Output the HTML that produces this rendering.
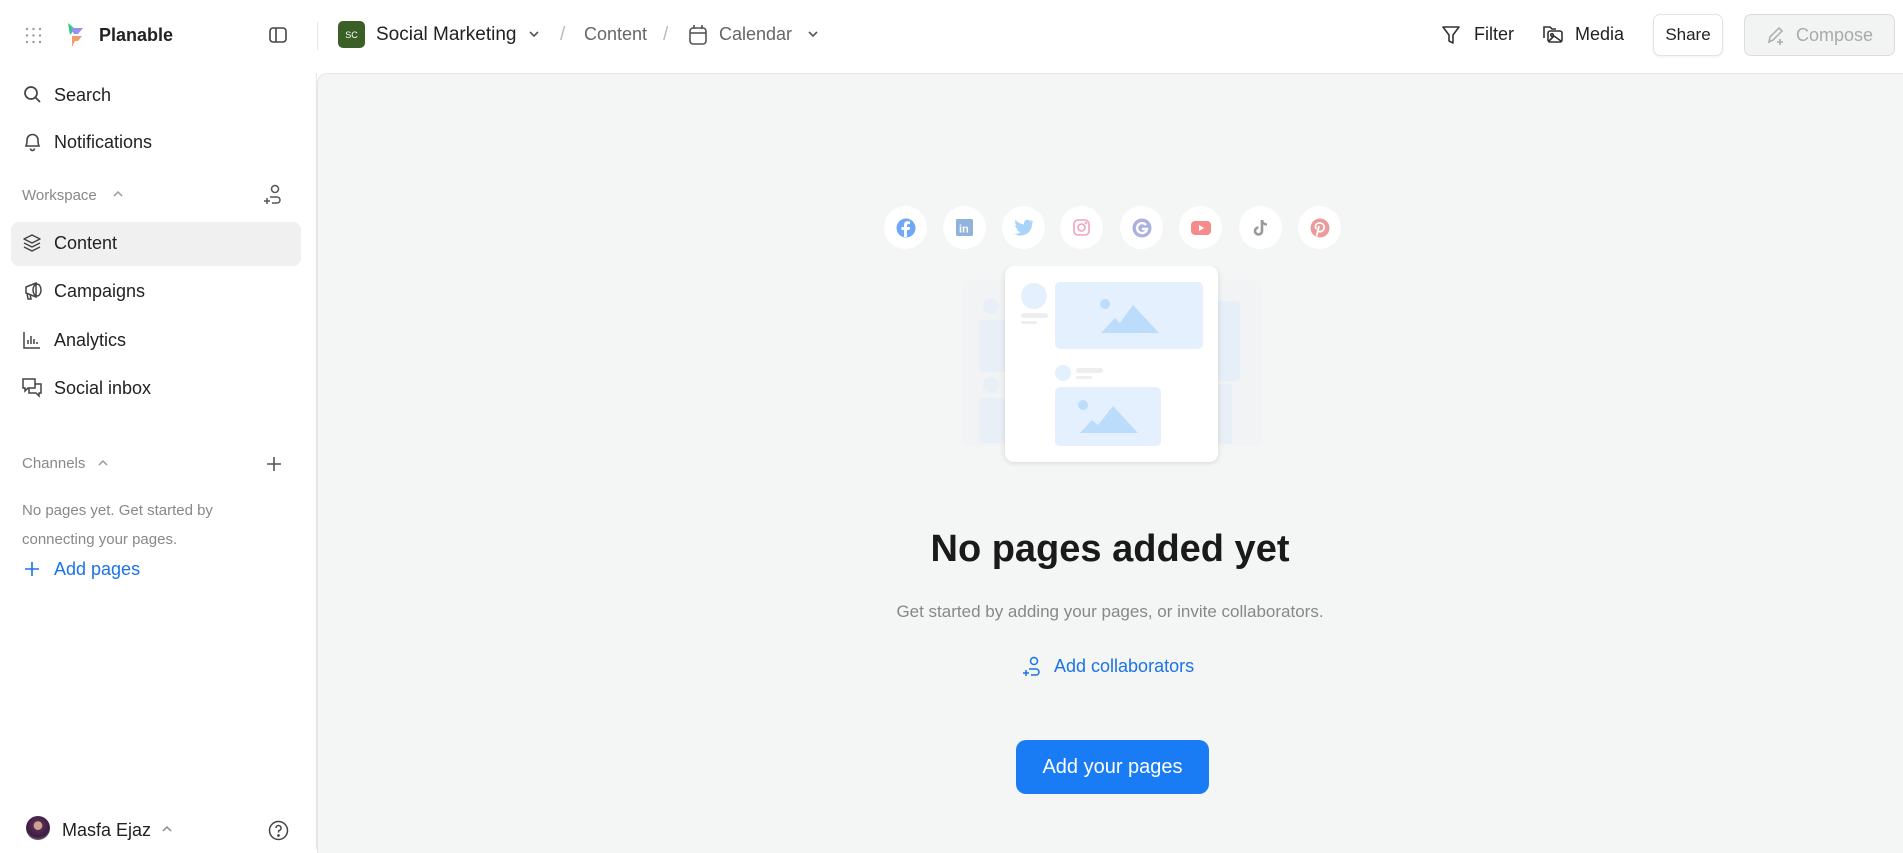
<!DOCTYPE html>
<html><head><meta charset="utf-8"><style>
*{box-sizing:border-box;margin:0;padding:0}
body{width:1903px;height:849px;overflow:hidden;background:#fff;font-family:"Liberation Sans",sans-serif;color:#222;position:relative}
.a{position:absolute;white-space:nowrap}
svg{display:block}
.nav{font-size:18px;color:#222}
.sec{font-size:15px;color:#888}
.main{position:absolute;left:317px;top:73px;width:1590px;height:780px;background:#f4f5f5;border-left:1px solid #e6e6e6;border-top:1px solid #e6e6e6;border-top-left-radius:10px}
.ci{position:absolute;width:43px;height:43px;border-radius:50%;background:#fff;top:206px;display:flex;align-items:center;justify-content:center}
</style></head><body>

<!-- top bar -->
<svg class="a" style="left:25px;top:27px" width="17" height="17" viewBox="0 0 17 17" fill="#999"><circle cx="2" cy="2" r="1.2"/><circle cx="8.5" cy="2" r="1.2"/><circle cx="15" cy="2" r="1.2"/><circle cx="2" cy="8.5" r="1.2"/><circle cx="8.5" cy="8.5" r="1.2"/><circle cx="15" cy="8.5" r="1.2"/><circle cx="2" cy="15" r="1.2"/><circle cx="8.5" cy="15" r="1.2"/><circle cx="15" cy="15" r="1.2"/></svg>
<svg class="a" style="left:66px;top:22px" width="18" height="26" viewBox="0 0 18 26"><path d="M2 1 L9 7 L4 13Z" fill="#2dc98a"/><path d="M5 6 L17 6 L12 12 L8 12Z" fill="#9a8ff0"/><path d="M6 14 L16 14 L12 19 L9 19 L6 25Z" fill="#f59a6a"/></svg>
<div class="a" style="left:99px;top:25px;font-size:18px;font-weight:bold;color:#222">Planable</div>
<svg class="a" style="left:268px;top:25px" width="20" height="20" viewBox="0 0 20 20" fill="none" stroke="#444" stroke-width="1.6"><rect x="2" y="3" width="16" height="14" rx="3"/><line x1="8" y1="3" x2="8" y2="17"/></svg>
<div class="a" style="left:317px;top:22px;width:1px;height:28px;background:#e4e4e4"></div>
<div class="a" style="left:338px;top:21px;width:27px;height:27px;border-radius:5px;background:#3a5f27;color:#fff;font-size:9px;display:flex;align-items:center;justify-content:center">SC</div>
<div class="a" style="left:376px;top:24px;font-size:19px;color:#222">Social Marketing</div>
<svg class="a" style="left:528px;top:30px" width="12" height="8" viewBox="0 0 12 8" fill="none" stroke="#555" stroke-width="1.6"><path d="M2 2 L6 6 L10 2"/></svg>
<div class="a" style="left:560px;top:24px;font-size:19px;color:#bbb">/</div>
<div class="a" style="left:584px;top:24px;font-size:18px;color:#666">Content</div>
<div class="a" style="left:663px;top:24px;font-size:19px;color:#bbb">/</div>
<svg class="a" style="left:688px;top:24px" width="20" height="22" viewBox="0 0 20 22" fill="none" stroke="#555" stroke-width="1.6"><rect x="2" y="4" width="16" height="16" rx="3"/><line x1="2" y1="9" x2="18" y2="9"/><line x1="6" y1="1" x2="6" y2="5"/><line x1="14" y1="1" x2="14" y2="5"/></svg>
<div class="a" style="left:719px;top:24px;font-size:18px;color:#666">Calendar</div>
<svg class="a" style="left:807px;top:30px" width="12" height="8" viewBox="0 0 12 8" fill="none" stroke="#555" stroke-width="1.6"><path d="M2 2 L6 6 L10 2"/></svg>

<svg class="a" style="left:1442px;top:25px" width="18" height="20" viewBox="0 0 18 20" fill="none" stroke="#333" stroke-width="1.6" stroke-linejoin="round"><path d="M1 2 H17 L11 10 V18 L7 16 V10Z"/></svg>
<div class="a" style="left:1474px;top:24px;font-size:18px;color:#222">Filter</div>
<svg class="a" style="left:1542px;top:24px" width="22" height="20" viewBox="0 0 22 20" fill="none" stroke="#333" stroke-width="1.6"><path d="M2 14 V3 H8 L10 5 H14"/><rect x="6" y="7" width="14" height="11" rx="2"/><circle cx="10" cy="11" r="1.3"/><path d="M7 17 L12 12 L19 17"/></svg>
<div class="a" style="left:1575px;top:24px;font-size:18px;color:#222">Media</div>
<div class="a" style="left:1653px;top:14px;width:70px;height:42px;border:1px solid #e2e2e2;border-radius:7px;background:#fff;font-size:17px;color:#222;display:flex;align-items:center;justify-content:center;box-shadow:0 1px 2px rgba(0,0,0,.06)">Share</div>
<div class="a" style="left:1744px;top:14px;width:151px;height:42px;border:1px solid #dcdcdc;border-radius:7px;background:#f2f3f3;font-size:18px;color:#aaa;display:flex;align-items:center;justify-content:center;gap:10px"><svg width="20" height="20" viewBox="0 0 20 20" fill="none" stroke="#aaa" stroke-width="1.5"><path d="M3 17 L4 12 L13 3 L16 6 L7 15Z"/><path d="M14 14 V20 M11 17 H17"/></svg>Compose</div>

<!-- sidebar -->
<svg class="a" style="left:23px;top:85px" width="19" height="19" viewBox="0 0 19 19" fill="none" stroke="#444" stroke-width="1.7"><circle cx="8" cy="8" r="6"/><line x1="12.5" y1="12.5" x2="17" y2="17"/></svg>
<div class="a nav" style="left:54px;top:85px">Search</div>
<svg class="a" style="left:23px;top:132px" width="19" height="20" viewBox="0 0 19 20" fill="none" stroke="#444" stroke-width="1.6"><path d="M3 14 C4 12 4 10 4 8 A5.5 5.5 0 0 1 15 8 C15 10 15 12 16 14Z"/><path d="M7.5 16.5 A2 2 0 0 0 11.5 16.5"/></svg>
<div class="a nav" style="left:54px;top:132px">Notifications</div>
<div class="a sec" style="left:22px;top:187px">Workspace</div>
<svg class="a" style="left:112px;top:190px" width="12" height="8" viewBox="0 0 12 8" fill="none" stroke="#999" stroke-width="1.5"><path d="M2 6 L6 2 L10 6"/></svg>
<svg class="a" style="left:263px;top:184px" width="20" height="22" viewBox="0 0 20 22" fill="none" stroke="#555" stroke-width="1.5"><circle cx="12" cy="5" r="3.5"/><path d="M7 13 H14 A3 3 0 0 1 14 19 H9"/><path d="M4 14 V20 M1 17 H7"/></svg>
<div class="a" style="left:11px;top:222px;width:290px;height:44px;border-radius:8px;background:#f0f0f0"></div>
<svg class="a" style="left:22px;top:233px" width="20" height="20" viewBox="0 0 20 20" fill="none" stroke="#444" stroke-width="1.5" stroke-linejoin="round"><path d="M10 2 L18 6 L10 10 L2 6Z"/><path d="M2 10 L10 14 L18 10"/><path d="M2 14 L10 18 L18 14"/></svg>
<div class="a nav" style="left:54px;top:233px">Content</div>
<svg class="a" style="left:22px;top:281px" width="21" height="20" viewBox="0 0 21 20" fill="none" stroke="#444" stroke-width="1.5"><path d="M4 6 L14 2 V16 L4 12Z"/><ellipse cx="15" cy="9" rx="4" ry="6"/><path d="M5 12 L6 18 H9 L8 13"/></svg>
<div class="a nav" style="left:54px;top:281px">Campaigns</div>
<svg class="a" style="left:23px;top:331px" width="18" height="18" viewBox="0 0 18 18" fill="none" stroke="#444" stroke-width="1.5"><path d="M1 1 V17 H17"/><path d="M5 13 V9 M8 13 V5 M11 13 V8 M14 13 V11"/></svg>
<div class="a nav" style="left:54px;top:330px">Analytics</div>
<svg class="a" style="left:22px;top:378px" width="21" height="20" viewBox="0 0 21 20" fill="none" stroke="#444" stroke-width="1.5"><path d="M1 1 H13 V10 H6 L3 13 V10 H1Z"/><path d="M13 6 H19 V15 H17 V18 L14 15 H7 V10"/></svg>
<div class="a nav" style="left:54px;top:378px">Social inbox</div>
<div class="a sec" style="left:22px;top:455px">Channels</div>
<svg class="a" style="left:97px;top:459px" width="12" height="8" viewBox="0 0 12 8" fill="none" stroke="#999" stroke-width="1.5"><path d="M2 6 L6 2 L10 6"/></svg>
<svg class="a" style="left:266px;top:456px" width="16" height="16" viewBox="0 0 16 16" stroke="#555" stroke-width="1.6"><path d="M8 1 V15 M1 8 H15"/></svg>
<div class="a" style="left:22px;top:496px;font-size:15px;color:#888;line-height:29px">No pages yet. Get started by<br>connecting your pages.</div>
<svg class="a" style="left:24px;top:561px" width="16" height="16" viewBox="0 0 16 16" stroke="#1a73e8" stroke-width="1.6"><path d="M8 1 V15 M1 8 H15"/></svg>
<div class="a" style="left:54px;top:559px;font-size:18px;color:#1a73e8">Add pages</div>

<div class="a" style="left:26px;top:816px;width:24px;height:24px;border-radius:50%;background:radial-gradient(circle at 50% 40%,#c9a58a 0 22%,#5a2a5a 24%,#3a1f3f 60%,#b8a0c8 100%)"></div>
<div class="a" style="left:62px;top:820px;font-size:18px;color:#222">Masfa Ejaz</div>
<svg class="a" style="left:161px;top:825px" width="12" height="8" viewBox="0 0 12 8" fill="none" stroke="#888" stroke-width="1.5"><path d="M2 6 L6 2 L10 6"/></svg>
<svg class="a" style="left:268px;top:820px" width="21" height="21" viewBox="0 0 21 21" fill="none" stroke="#444" stroke-width="1.5"><circle cx="10.5" cy="10.5" r="9"/><path d="M8 8 A2.5 2.5 0 1 1 11 10.5 C10.5 11 10.5 11.5 10.5 12.5"/><circle cx="10.5" cy="15.5" r=".6" fill="#444"/></svg>
<div class="a" style="left:316px;top:73px;width:1px;height:776px;background:#e6e6e6"></div>

<!-- main -->
<div class="main"></div>

<div class="ci" style="left:884px"><svg width="20" height="20" viewBox="0 0 20 20"><circle cx="10" cy="10" r="9.5" fill="#6ea8f7"/><path d="M11 19 V12 H13.5 L14 9 H11 V7.5 C11 6.5 11.5 6 12.5 6 H14 V3.5 C13 3.3 12 3.3 11.5 3.3 C9.3 3.3 8 4.6 8 7 V9 H5.5 V12 H8 V19Z" fill="#fff"/></svg></div>
<div class="ci" style="left:943px"><svg width="17" height="17" viewBox="0 0 17 17"><rect width="17" height="17" rx="1.5" fill="#8fb3dd"/><text x="3" y="13.5" font-size="11" font-weight="bold" fill="#fff" font-family="Liberation Sans">in</text></svg></div>
<div class="ci" style="left:1002px"><svg width="20" height="17" viewBox="0 0 24 20"><path d="M23 2.5 C22 3 21 3.3 20 3.4 C21 2.8 22 1.8 22.3 0.7 C21.3 1.3 20.2 1.7 19 1.9 C16.5 -0.6 12 0.9 12 5 C12 5.5 12 6 12.2 6.2 C8 6 4.4 4 2 1 C0.6 3.4 1.5 6.5 3.6 7.8 C2.8 7.8 2.1 7.6 1.4 7.2 C1.4 9.6 3.1 11.5 5.3 12 C4.6 12.2 3.8 12.2 3.1 12.1 C3.7 14 5.6 15.4 7.7 15.4 C5.6 17.1 3 17.8 0.4 17.5 C11 23.7 22 16 21.6 5.3 C22.3 4.6 22.7 3.6 23 2.5Z" fill="#a9d4f8"/></svg></div>
<div class="ci" style="left:1060px"><svg width="17" height="17" viewBox="0 0 17 17" fill="none" stroke="#f0a3bd" stroke-width="1.6"><rect x="1" y="1" width="15" height="15" rx="4"/><circle cx="8.5" cy="8.5" r="3.5"/><circle cx="13" cy="4" r=".5" fill="#f0a3bd"/></svg></div>
<div class="ci" style="left:1120px"><svg width="20" height="20" viewBox="0 0 20 20"><circle cx="10" cy="10" r="9.5" fill="#aab0e0"/><path d="M14 7 A5 5 0 1 0 15 11 H10" fill="none" stroke="#fff" stroke-width="2.4"/></svg></div>
<div class="ci" style="left:1179px"><svg width="20" height="14" viewBox="0 0 20 14"><rect width="20" height="14" rx="4" fill="#f78b8b"/><path d="M8 4 L13 7 L8 10Z" fill="#fff"/></svg></div>
<div class="ci" style="left:1239px"><svg width="16" height="18" viewBox="0 0 16 18"><path d="M9 1 V12 A3.5 3.5 0 1 1 5.5 8.5" fill="none" stroke="#999" stroke-width="2.6"/><path d="M9 1.5 C9.5 4 11.5 5.5 14 5.5" fill="none" stroke="#999" stroke-width="2.4"/></svg></div>
<div class="ci" style="left:1298px"><svg width="20" height="20" viewBox="0 0 20 20"><circle cx="10" cy="10" r="9.5" fill="#ec9b9b"/><path d="M9 8 L6.5 18.5 M8 13 C11 15 15 12 14 8 C13 4 6 4 5.5 8 C5.3 9.5 6 10.5 6.5 11" fill="none" stroke="#fff" stroke-width="1.8"/></svg></div>

<!-- illustration -->
<svg class="a" style="left:962px;top:266px" width="300" height="200" viewBox="0 0 300 200">
  <rect x="0" y="14" width="300" height="166" rx="6" fill="#f1f3f4"/>
  <g opacity=".7">
    <circle cx="29" cy="40" r="8" fill="#e6eef8"/><rect x="17" y="54" width="30" height="52" rx="3" fill="#e6eef8"/>
    <circle cx="29" cy="119" r="8" fill="#e6eef8"/><rect x="17" y="132" width="30" height="45" rx="3" fill="#e6eef8"/>
    <rect x="250" y="35" width="28" height="80" rx="4" fill="#e1ebf8"/>
    <rect x="250" y="118" width="20" height="60" rx="3" fill="#e6eef8"/>
  </g>
  <rect x="43" y="0" width="213" height="196" rx="9" fill="#fff" style="filter:drop-shadow(0 1px 3px rgba(0,0,0,.12))"/>
  <circle cx="72" cy="30" r="13" fill="#e4f0fd"/>
  <rect x="59" y="47" width="27" height="5" rx="2.5" fill="#eee"/><rect x="59" y="55" width="16" height="3" rx="1.5" fill="#eee"/>
  <rect x="93" y="16" width="148" height="67" rx="5" fill="#e4f0fd"/>
  <circle cx="143" cy="38" r="5" fill="#bcdcfb"/><path d="M139 67 L153 52 L158 57 L171 39 L197 67Z" fill="#bcdcfb"/>
  <circle cx="101" cy="107" r="8" fill="#e4f0fd"/>
  <rect x="114" y="102" width="27" height="5" rx="2.5" fill="#eee"/><rect x="114" y="110" width="16" height="3" rx="1.5" fill="#eee"/>
  <rect x="93" y="121" width="106" height="59" rx="5" fill="#e4f0fd"/>
  <circle cx="121" cy="139" r="5" fill="#bcdcfb"/><path d="M118 167 L130 154 L136 159 L151 140 L176 167Z" fill="#bcdcfb"/>
</svg>

<div class="a" style="left:317px;width:1586px;top:528px;text-align:center;font-size:38px;font-weight:bold;color:#1a1a1a">No pages added yet</div>
<div class="a" style="left:317px;width:1586px;top:602px;text-align:center;font-size:17px;color:#888">Get started by adding your pages, or invite collaborators.</div>
<svg class="a" style="left:1022px;top:656px" width="20" height="22" viewBox="0 0 20 22" fill="none" stroke="#1a73e8" stroke-width="1.5"><circle cx="12" cy="5" r="3.5"/><path d="M7 13 H14 A3 3 0 0 1 14 19 H9"/><path d="M4 14 V20 M1 17 H7"/></svg>
<div class="a" style="left:1054px;top:656px;font-size:18px;color:#1a73e8">Add collaborators</div>
<div class="a" style="left:1016px;top:740px;width:193px;height:54px;border-radius:10px;background:#1a7cf5;color:#fff;font-size:20px;display:flex;align-items:center;justify-content:center">Add your pages</div>

</body></html>
